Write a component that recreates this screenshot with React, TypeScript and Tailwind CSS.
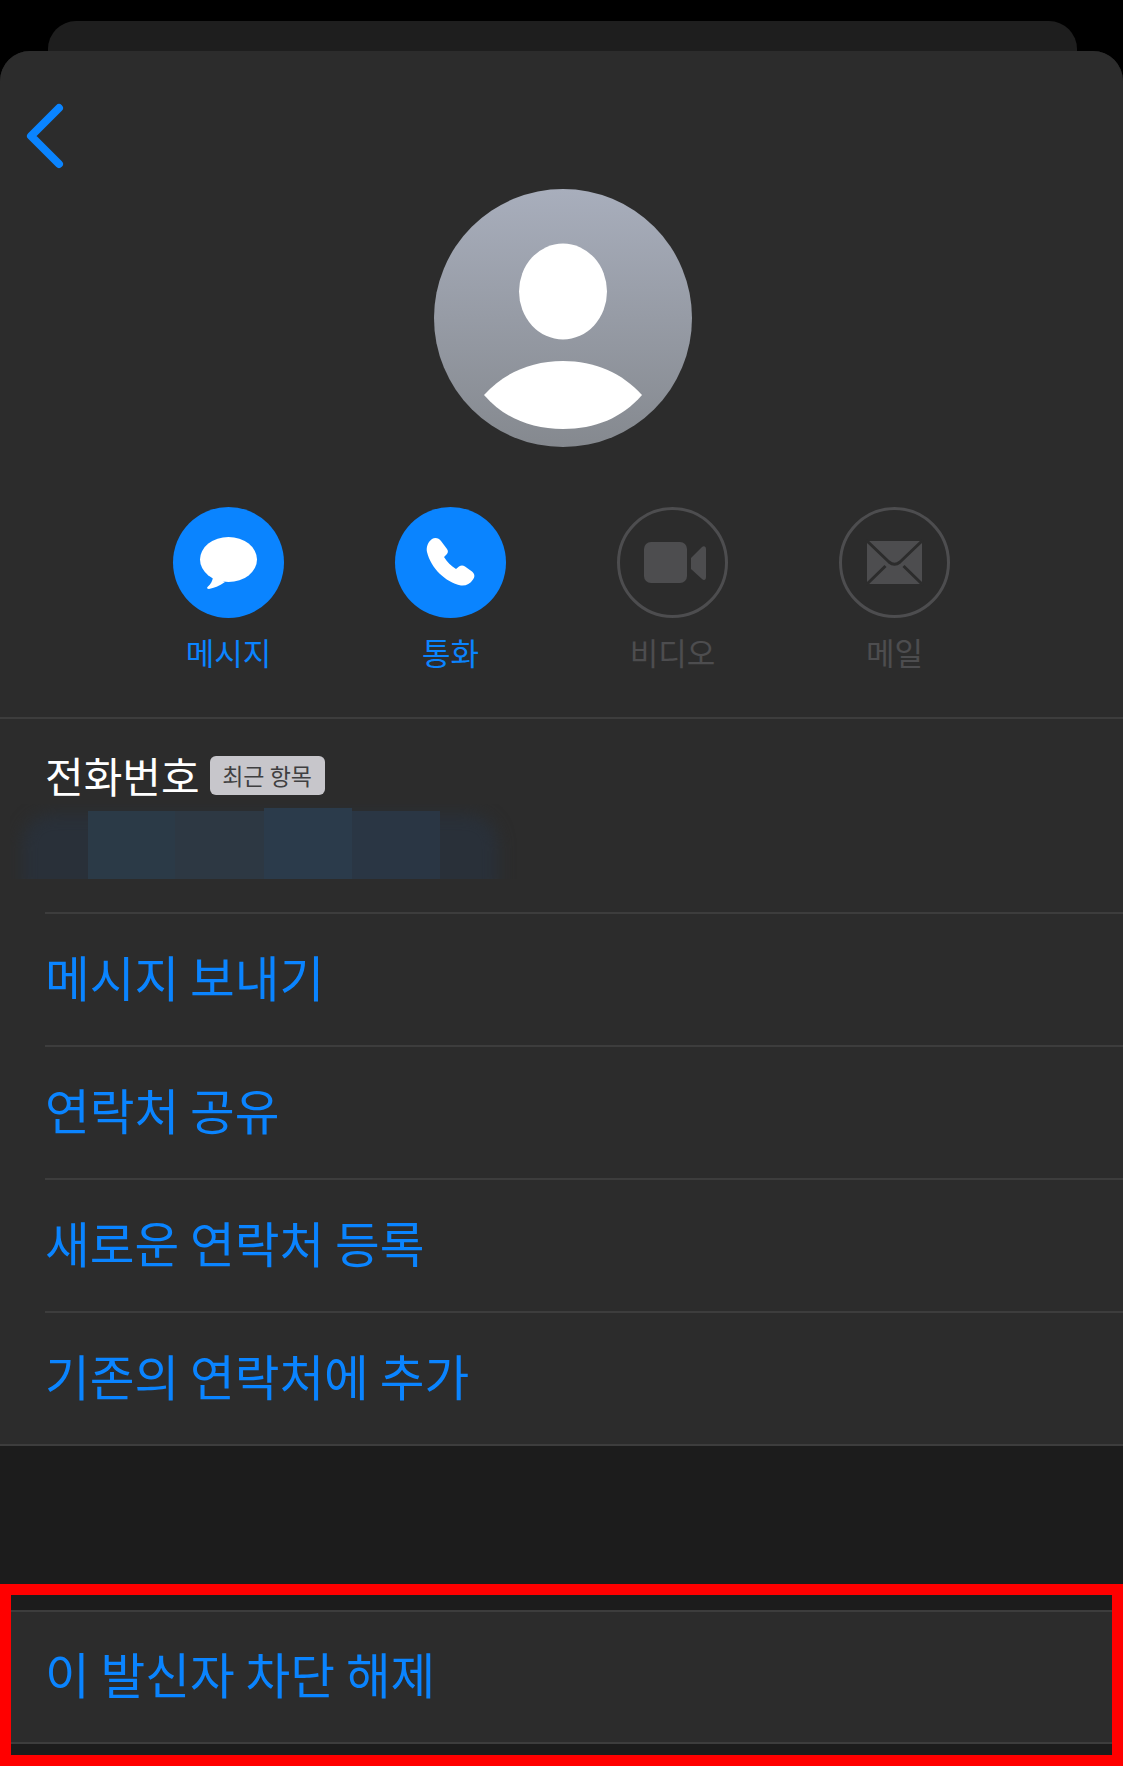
export default function App() {
  const rows = ["메시지 보내기", "연락처 공유", "새로운 연락처 등록", "기존의 연락처에 추가"];
  return (
    <div className="relative w-[1123px] h-[1766px] overflow-hidden bg-black pt-[21px] font-['Noto_Sans_CJK_KR','Noto_Sans',sans-serif]">
      <div className="ml-[48px] mr-[46px] h-[30px] rounded-t-[28px] bg-[#1e1e1e]" />
      <div className="h-[1715px] rounded-t-[30px] overflow-hidden bg-[#1c1c1c]">
        <div className="bg-[#2c2c2c] border-b-2 border-[#3d3d3d]">
          <div className="h-[668px] border-b-2 border-[#3d3d3d] flex flex-col">
            <svg className="ml-[24px] mt-[51px] shrink-0" width="42" height="68" viewBox="0 0 42 68" fill="none">
              <path d="M35 6 L7 34 L35 62" stroke="#0a84ff" strokeWidth="8" strokeLinecap="round" strokeLinejoin="round" />
            </svg>
            <div className="self-center ml-[2px] mt-[19px] w-[258px] h-[258px] shrink-0 rounded-full bg-gradient-to-b from-[#a8aebc] to-[#85898f]">
              <svg width="258" height="258" viewBox="0 0 258 258">
                <ellipse cx="129" cy="102.5" rx="44" ry="48" fill="#fff" />
                <path d="M50 206 C70 184 97 172 129 172 C161 172 188 184 208 206 C188 229 161 240 129 240 C97 240 70 229 50 206 Z" fill="#fff" />
              </svg>
            </div>
            <div className="mt-[60px] flex justify-center">
              <div className="w-[222px] flex flex-col items-center text-[#0a84ff]">
                <div className="w-[111px] h-[111px] rounded-full bg-[#0a84ff]">
                  <svg width="111" height="111" viewBox="0 0 111 111">
                    <ellipse cx="55.5" cy="52.5" rx="28.5" ry="22.5" fill="#fff" />
                    <path d="M40 70 L52 75 C46 79 41 81 36 82 C34 82 33.5 80.5 35 79.5 C38 77 39.5 74 40 70 Z" fill="#fff" />
                  </svg>
                </div>
                <span className="mt-[12px] text-[31px] leading-[44px]">메시지</span>
              </div>
              <div className="w-[222px] flex flex-col items-center text-[#0a84ff]">
                <div className="w-[111px] h-[111px] rounded-full bg-[#0a84ff]">
                  <svg width="111" height="111" viewBox="0 0 111 111">
                    <path d="M37 32 C40 30 44 31 46 34 L52 42 C53.5 44 53 46 51.5 47.5 L49 50 C52 55 56 59 61 62 L64 59.5 C66 58 68 58 70 59.5 L77 64.5 C80 67 80 70 78 72.5 C75 77 71 79 66 78.5 C50 75 36 61 32 45 C31 40 33 35 37 32 Z" fill="#fff" />
                  </svg>
                </div>
                <span className="mt-[12px] text-[31px] leading-[44px]">통화</span>
              </div>
              <div className="w-[222px] flex flex-col items-center text-[#4d4d4f]">
                <div className="w-[111px] h-[111px] rounded-full border-[3px] border-[#4d4d4f]">
                  <svg className="-m-[3px]" width="111" height="111" viewBox="0 0 111 111">
                    <rect x="27" y="35" width="43" height="41" rx="7" fill="#4d4d4f" />
                    <path d="M74 51 L85 40 C87 38.5 89 39.5 89 42 L89 70 C89 73 87 74 85 72 L74 62 Z" fill="#4d4d4f" />
                  </svg>
                </div>
                <span className="mt-[12px] text-[31px] leading-[44px]">비디오</span>
              </div>
              <div className="w-[222px] flex flex-col items-center text-[#4d4d4f]">
                <div className="w-[111px] h-[111px] rounded-full border-[3px] border-[#4d4d4f]">
                  <svg className="-m-[3px]" width="111" height="111" viewBox="0 0 111 111">
                    <rect x="28" y="34" width="55" height="43" rx="3" fill="#4d4d4f" />
                    <path d="M27 33 L50 55 Q55.5 59.5 61 55 L84 33 M27 78 L46.5 59 M84 78 L64.5 59" stroke="#2c2c2c" strokeWidth="3" fill="none" />
                  </svg>
                </div>
                <span className="mt-[12px] text-[31px] leading-[44px]">메일</span>
              </div>
            </div>
          </div>
          <div className="h-[193px] flex flex-col">
            <div className="mt-[32px] ml-[45px] flex items-center h-[48px]">
              <span className="text-[42px] leading-[48px] text-white">전화번호</span>
              <span className="ml-[10px] w-[115px] h-[39px] rounded-[6px] bg-[#c7c6cb] flex items-center justify-center text-[23px] text-[#3f3f41]">최근 항목</span>
            </div>
            <div className="relative mt-[5px] ml-[10px] w-[510px] h-[75px] overflow-hidden">
              <div className="absolute left-[12px] top-[10px] w-[476px] h-[100px] rounded-[30px] bg-[#293039] blur-[8px]" />
              <div className="absolute left-[78px] top-[4px] w-[390px] h-[71px] flex items-end">
                <div className="w-[87px] h-[68px] bg-[#2b3a47]" />
                <div className="w-[89px] h-[68px] bg-[#2d3843]" />
                <div className="w-[88px] h-[71px] bg-[#2b3b4b]" />
                <div className="w-[88px] h-[68px] bg-[#2a3644]" />
              </div>
            </div>
          </div>
          {rows.map((t) => (
            <div key={t} className="ml-[45px] h-[133px] border-t-2 border-[#3d3d3d] flex items-center pb-[7px] text-[48.6px] text-[#0a84ff]">
              {t}
            </div>
          ))}
        </div>
        <div className="mt-[164px] h-[134px] bg-[#2c2c2c] border-y-2 border-[#3d3d3d] pl-[45px] pb-[7px] flex items-center text-[48.6px] text-[#0a84ff]">
          이 발신자 차단 해제
        </div>
      </div>
      <div className="absolute left-0 top-[1584px] w-[1123px] h-[182px] border-[11px] border-[#ff0000] pointer-events-none" />
    </div>
  );
}
